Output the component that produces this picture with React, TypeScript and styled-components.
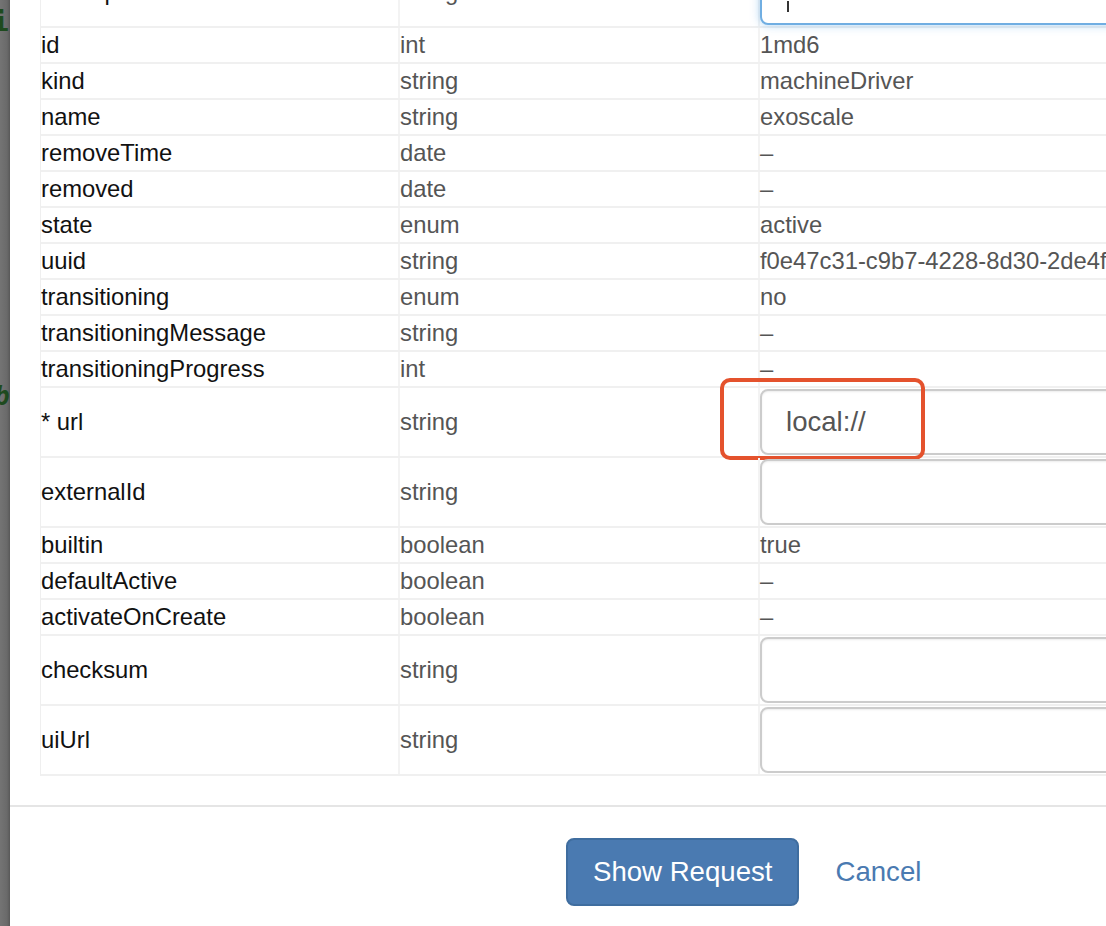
import styled, { createGlobalStyle } from "styled-components";

const Global = createGlobalStyle`
  html, body {
    margin: 0;
    padding: 0;
    overflow: hidden;
    background: #ffffff;
  }
  body {
    font-family: "Liberation Sans", Arial, Helvetica, sans-serif;
  }
`;

const Page = styled.div`
    display: flex;
    width: 1106px;
    height: 926px;
    overflow: hidden;
`;

const Backdrop = styled.div`
    flex: 0 0 10px;
    display: flex;
    flex-direction: column;
    overflow: hidden;
    background: linear-gradient(to right, #747474, #6a6a6a 70%, #585858);
`;

const BackLetter = styled.span<{ $top: number; $italic?: boolean }>`
    display: block;
    margin-top: ${(p) => p.$top}px;
    margin-left: ${(p) => (p.$italic ? -6 : -7)}px;
    font-family: "DejaVu Sans Mono", monospace;
    font-size: 26px;
    line-height: 26px;
    font-weight: bold;
    font-style: ${(p) => (p.$italic ? "italic" : "normal")};
    color: #1e4a1e;
`;

const Modal = styled.div`
    flex: 1;
    background: #ffffff;
    overflow: hidden;
`;

const Body = styled.div`
    margin-top: -42px;
    padding: 0 0 29px 30px;
`;

const Table = styled.div`
    width: 1081px;
    border-left: 1px solid #efefef;
`;

const Row = styled.div<{ $tall?: boolean }>`
    display: grid;
    grid-template-columns: 359px 360px 362px;
    box-sizing: border-box;
    height: ${(p) => (p.$tall ? 70 : 36)}px;
    border-bottom: 2px solid #f0f0f0;
    font-size: 23.8px;
`;

const Cell = styled.div<{ $muted?: boolean }>`
    position: relative;
    display: flex;
    align-items: center;
    box-sizing: border-box;
    border-right: 2px solid #f3f3f3;
    white-space: nowrap;
    color: ${(p) => (p.$muted ? "#555555" : "#111111")};
`;

const Input = styled.div<{ $focused?: boolean }>`
    position: relative;
    box-sizing: border-box;
    width: 100%;
    height: 66px;
    margin: 1px 0;
    padding-left: 24px;
    display: flex;
    align-items: center;
    border: 2px solid ${(p) => (p.$focused ? "#70aee2" : "#cccccc")};
    border-radius: 8px;
    background: #ffffff;
    box-shadow: ${(p) =>
        p.$focused
            ? "inset 0 1px 1px rgba(0,0,0,.075), 0 0 10px rgba(102,175,233,.55)"
            : "inset 0 1px 2px rgba(0,0,0,.08)"};
    font-size: 27.6px;
    color: #555555;
`;

const Caret = styled.span`
    position: absolute;
    left: 25px;
    top: 40px;
    width: 1.5px;
    height: 11px;
    background: #333333;
`;

const Highlight = styled.div`
    position: absolute;
    left: -40px;
    top: -10px;
    width: 205px;
    height: 82px;
    box-sizing: border-box;
    border: 4px solid #e4522d;
    border-radius: 10px;
    pointer-events: none;
`;

const Footer = styled.div`
    display: flex;
    align-items: center;
    gap: 36px;
    border-top: 2px solid #e5e5e5;
    padding: 31px 0 0 556px;
`;

const PrimaryButton = styled.button`
    box-sizing: border-box;
    height: 68px;
    padding: 0 25px;
    border: 2px solid #3f6d9f;
    border-radius: 8px;
    background: #4a7ab1;
    color: #ffffff;
    font-family: inherit;
    font-size: 27.6px;
`;

const LinkButton = styled.a`
    color: #4a7ab1;
    font-size: 27.6px;
    text-decoration: none;
`;

type Field = {
    name: string;
    type: string;
    value?: string;
    input?: boolean;
    focused?: boolean;
    marked?: boolean;
};

const fields: Field[] = [
    { name: "description", type: "string", input: true, focused: true },
    { name: "id", type: "int", value: "1md6" },
    { name: "kind", type: "string", value: "machineDriver" },
    { name: "name", type: "string", value: "exoscale" },
    { name: "removeTime", type: "date", value: "–" },
    { name: "removed", type: "date", value: "–" },
    { name: "state", type: "enum", value: "active" },
    { name: "uuid", type: "string", value: "f0e47c31-c9b7-4228-8d30-2de4f8a1c6b2" },
    { name: "transitioning", type: "enum", value: "no" },
    { name: "transitioningMessage", type: "string", value: "–" },
    { name: "transitioningProgress", type: "int", value: "–" },
    { name: "* url", type: "string", input: true, value: "local://", marked: true },
    { name: "externalId", type: "string", input: true },
    { name: "builtin", type: "boolean", value: "true" },
    { name: "defaultActive", type: "boolean", value: "–" },
    { name: "activateOnCreate", type: "boolean", value: "–" },
    { name: "checksum", type: "string", input: true },
    { name: "uiUrl", type: "string", input: true },
];

export default () => {
    return (
        <Page>
            <Global />
            <Backdrop>
                <BackLetter $top={9}>i</BackLetter>
                <BackLetter $top={348} $italic>b</BackLetter>
            </Backdrop>
            <Modal>
                <Body>
                    <Table>
                        {fields.map((f) => (
                            <Row key={f.name} $tall={f.input}>
                                <Cell>{f.name}</Cell>
                                <Cell $muted>{f.type}</Cell>
                                <Cell $muted>
                                    {f.input ? (
                                        <Input $focused={f.focused}>
                                            {f.value}
                                            {f.focused && <Caret />}
                                        </Input>
                                    ) : (
                                        f.value
                                    )}
                                    {f.marked && <Highlight />}
                                </Cell>
                            </Row>
                        ))}
                    </Table>
                </Body>
                <Footer>
                    <PrimaryButton>Show Request</PrimaryButton>
                    <LinkButton href="#">Cancel</LinkButton>
                </Footer>
            </Modal>
        </Page>
    );
};
